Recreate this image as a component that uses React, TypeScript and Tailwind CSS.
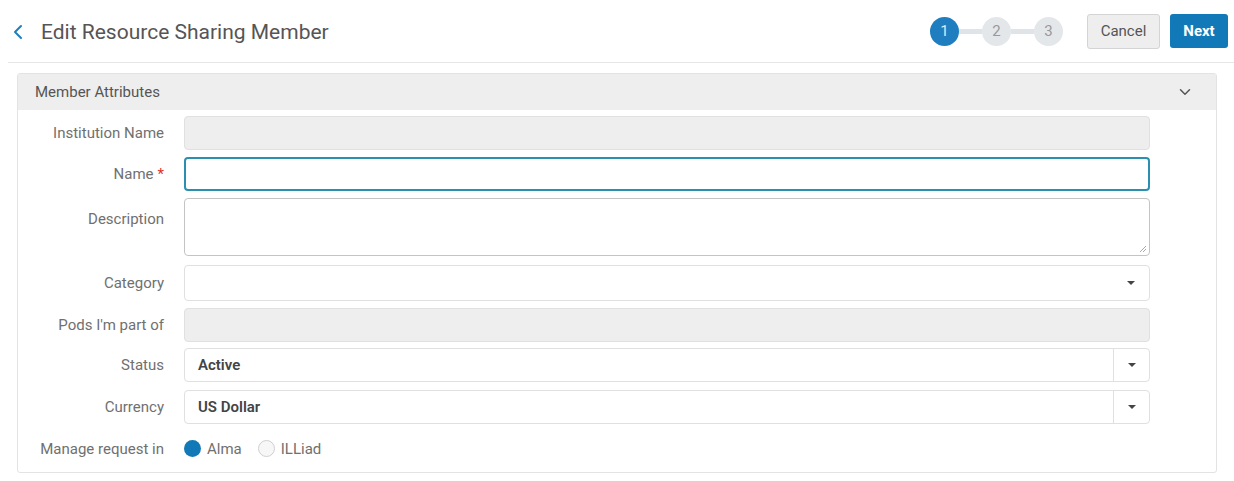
import { ChevronLeft, ChevronDown } from "lucide-react";

const Caret = () => (
  <svg width="10" height="6" viewBox="0 0 10 6" className="fill-[#444]">
    <path d="M1 1h8L5 5z" />
  </svg>
);

const Row = ({ label, required, children, top }: { label: string; required?: boolean; children: React.ReactNode; top?: boolean }) => (
  <div className={`flex ${top ? "items-start" : "items-center"}`}>
    <div className={`w-[146px] shrink-0 pt-[1px] text-right text-[15px] text-[#707070] ${top ? "pt-[10px]" : ""}`}>
      {label}
      {required && <span className="ml-[4px] text-[#e0322c]">*</span>}
    </div>
    <div className="ml-[20px] w-[966px]">{children}</div>
  </div>
);

export default function App() {
  return (
    <div className="h-[481px] w-[1234px] bg-white font-['Roboto',sans-serif]">
      <header className="ml-[8px] flex h-[63px] items-center border-b border-[#e6e6e6]">
        <ChevronLeft className="ml-[-2px] mt-[2px] h-[24px] w-[24px] text-[#1e7ebf]" strokeWidth={2} />
        <h1 className="ml-[11px] mt-[3px] text-[21px] text-[#555]">Edit Resource Sharing Member</h1>
        <div className="ml-auto flex items-center">
          <div className="flex items-center">
            <div className="flex h-[29px] w-[29px] items-center justify-center rounded-full bg-[#1e7ebf] text-[15px] text-[#dbe9f4]">1</div>
            <div className="h-[5px] w-[23px] bg-[#dfe4e8]" />
            <div className="flex h-[29px] w-[29px] items-center justify-center rounded-full bg-[#e3e7ea] text-[15px] text-[#999]">2</div>
            <div className="h-[5px] w-[23px] bg-[#dfe4e8]" />
            <div className="flex h-[29px] w-[29px] items-center justify-center rounded-full bg-[#e3e7ea] text-[15px] text-[#999]">3</div>
          </div>
          <button className="ml-[24px] h-[35px] w-[73px] rounded-[3px] border border-[#d4d4d4] bg-[#eeeeee] text-[15px] text-[#555]">Cancel</button>
          <button className="ml-[10px] mr-[6px] h-[34px] w-[58px] rounded-[3px] bg-[#1279b8] text-[15px] font-bold text-white">Next</button>
        </div>
      </header>

      <section className="ml-[17px] mt-[10px] h-[400px] w-[1200px] rounded-[3px] border border-[#e3e3e3]">
        <div className="flex h-[36px] items-center justify-between bg-[#eeeeee] pl-[17px] pr-[22px]">
          <span className="text-[15px] text-[#555]">Member Attributes</span>
          <ChevronDown className="h-[18px] w-[18px] text-[#555]" strokeWidth={2} />
        </div>
        <div className="flex flex-col pt-[6px]">
          <Row label="Institution Name">
            <div className="h-[34px] rounded-[4px] border border-[#e0e0e0] bg-[#eeeeee]" />
          </Row>
          <div className="mt-[7px]">
            <Row label="Name" required>
              <div className="h-[34px] rounded-[4px] border-2 border-[#2b8fb0] bg-white" />
            </Row>
          </div>
          <div className="mt-[7px]">
            <Row label="Description" top>
              <div className="relative h-[58px] rounded-[4px] border border-[#c4c4c4] bg-white">
                <svg className="absolute bottom-[2px] right-[2px]" width="9" height="9" viewBox="0 0 9 9">
                  <path d="M8 2L2 8M8 5L5 8" stroke="#aaa" strokeWidth="1" />
                </svg>
              </div>
            </Row>
          </div>
          <div className="mt-[9px]">
            <Row label="Category">
              <div className="flex h-[36px] items-center justify-end rounded-[4px] border border-[#e0e0e0] bg-white pr-[13px]">
                <Caret />
              </div>
            </Row>
          </div>
          <div className="mt-[7px]">
            <Row label="Pods I'm part of">
              <div className="h-[34px] rounded-[4px] border border-[#e0e0e0] bg-[#eeeeee]" />
            </Row>
          </div>
          <div className="mt-[6px]">
            <Row label="Status">
              <div className="flex h-[34px] rounded-[4px] border border-[#e0e0e0] bg-white">
                <div className="flex flex-1 items-center pl-[13px] text-[15px] font-semibold text-[#444]">Active</div>
                <div className="flex w-[36px] items-center justify-center border-l border-[#e0e0e0]"><Caret /></div>
              </div>
            </Row>
          </div>
          <div className="mt-[8px]">
            <Row label="Currency">
              <div className="flex h-[34px] rounded-[4px] border border-[#e0e0e0] bg-white">
                <div className="flex flex-1 items-center pl-[13px] text-[15px] font-semibold text-[#444]">US Dollar</div>
                <div className="flex w-[36px] items-center justify-center border-l border-[#e0e0e0]"><Caret /></div>
              </div>
            </Row>
          </div>
          <div className="mt-[13px]">
            <Row label="Manage request in">
              <div className="flex items-center text-[15px] text-[#707070]">
                <span className="h-[17px] w-[17px] rounded-full bg-[#1279b8]" />
                <span className="ml-[6px]">Alma</span>
                <span className="ml-[16px] h-[17px] w-[17px] rounded-full border border-[#cfcfcf] bg-[#f7f7f7]" />
                <span className="ml-[6px]">ILLiad</span>
              </div>
            </Row>
          </div>
        </div>
      </section>
    </div>
  );
}
